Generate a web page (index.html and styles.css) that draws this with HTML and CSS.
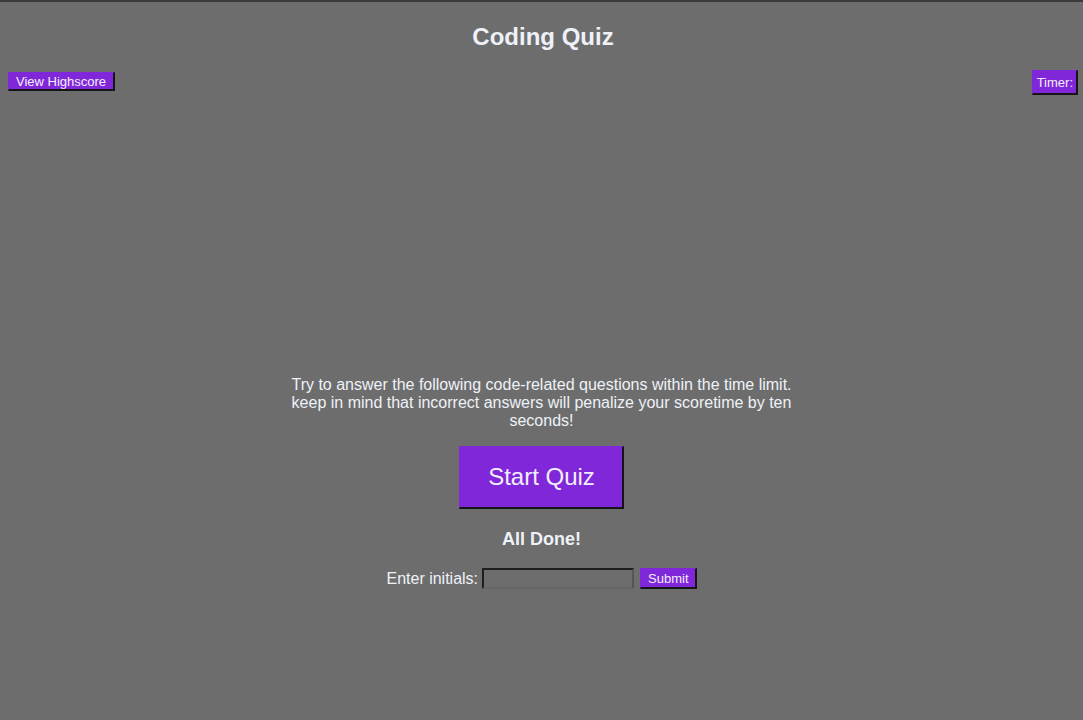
FILE: index.html
```html
<!DOCTYPE html>
<html>
<head>
<meta charset="utf-8">
<link rel="stylesheet" href="styles.css">
</head>
<body>
<header class="header">
  <h1 class="title">Coding Quiz</h1>
  <div class="toolbar">
    <button class="btn btn-small">View Highscore</button>
    <button class="btn btn-timer">Timer:</button>
  </div>
</header>
<main class="main">
  <p class="intro">Try to answer the following code-related questions within the time limit. keep in mind that incorrect answers will penalize your scoretime by ten seconds!</p>
  <button class="btn btn-start">Start Quiz</button>
  <h2 class="done">All Done!</h2>
  <form class="initials">
    <label class="label">Enter initials:</label>
    <input class="field" type="text">
    <button class="btn btn-submit" type="button">Submit</button>
  </form>
</main>
</body>
</html>
```
FILE: styles.css
```css
html, body {
  margin: 0;
  padding: 0;
  height: 100%;
}
body {
  background: #6d6d6d;
  border-top: 2px solid #3a3a3c;
  box-sizing: border-box;
  font-family: "Liberation Sans", Arial, sans-serif;
  color: #eef2f8;
}
.header {
  padding: 0 5px 0 8px;
}
.title {
  margin: 0;
  padding-top: 21px;
  font-size: 24px;
  line-height: 28px;
  text-align: center;
}
.toolbar {
  display: flex;
  justify-content: space-between;
  align-items: flex-start;
  margin-top: 19px;
}
.btn {
  font-family: "Liberation Sans", Arial, sans-serif;
  background: #8027d9;
  color: #f3eefc;
  border-style: solid;
  border-color: #8027d9 #151515 #151515 #8027d9;
  cursor: pointer;
}
.btn-small {
  font-size: 13px;
  line-height: 15px;
  padding: 1px 7px 0 7px;
  border-width: 1px 2px 2px 1px;
  margin-top: 2px;
}
.btn-timer {
  font-size: 13px;
  line-height: 15px;
  padding: 3px 3px 2px 4px;
  border-width: 1px 2px 2px 1px;
  height: 25px;
}
.main {
  display: flex;
  flex-direction: column;
  align-items: center;
  margin-top: 281px;
}
.intro {
  width: 520px;
  margin: 0;
  font-size: 16px;
  line-height: 18px;
  text-align: center;
}
.btn-start {
  margin-top: 16px;
  font-size: 24px;
  line-height: 28px;
  padding: 16px 27px 16px 28px;
  border-width: 1px 2px 2px 1px;
}
.done {
  margin: 19px 0 0 0;
  font-size: 18px;
  line-height: 22px;
}
.initials {
  display: flex;
  align-items: center;
  margin-top: 18px;
  font-size: 16px;
}
.label {
  margin-right: 4px;
}
.field {
  width: 152px;
  height: 21px;
  box-sizing: border-box;
  background: transparent;
  border: 2px solid #1e1e1e;
  border-right-color: #555;
  border-bottom-color: #666;
  margin: 0 6px 0 0;
  padding: 0;
}
.btn-submit {
  font-size: 13px;
  line-height: 15px;
  padding: 2px 6px 1px 7px;
  border-width: 1px 2px 2px 1px;
}
```
